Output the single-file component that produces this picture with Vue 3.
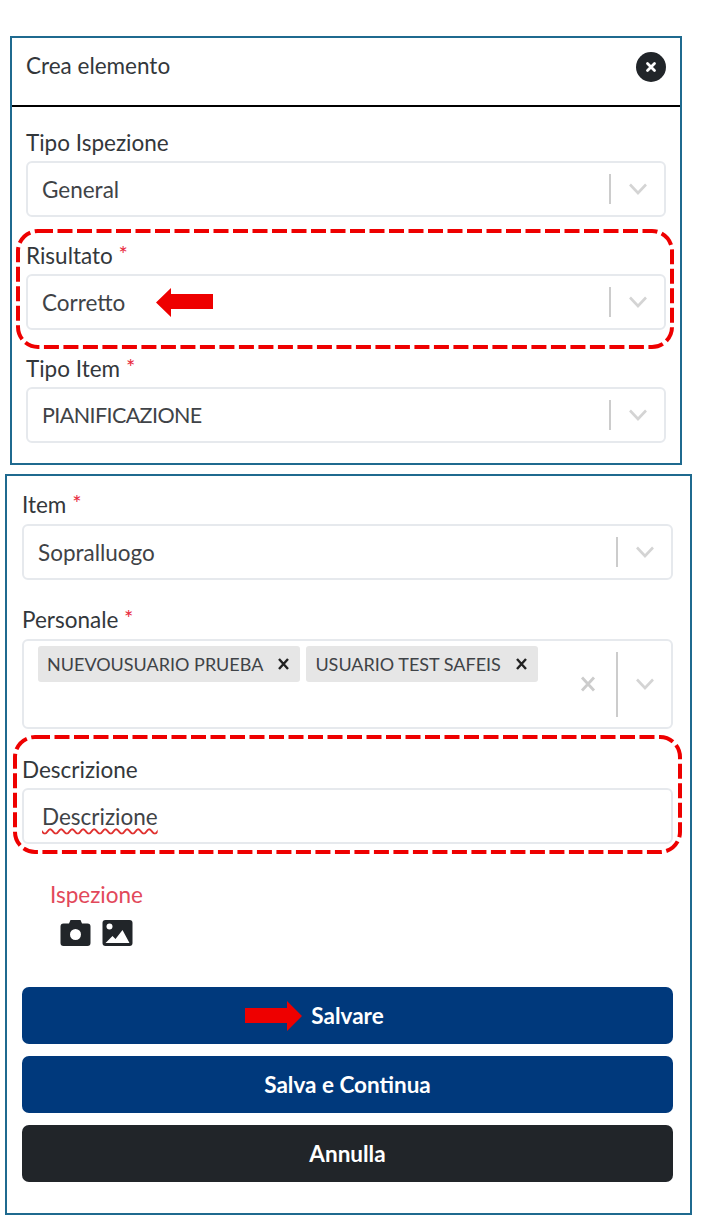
<template>
  <div class="page">
    <section class="card card-top">
      <header class="card-header">
        <span class="title">Crea elemento</span>
        <button class="close-btn" type="button">
          <svg width="12" height="12" viewBox="0 0 12 12"><path d="M2.500 2.500l7 7M9.500 2.500l-7 7" stroke="#fff" stroke-width="2.800" stroke-linecap="round" /></svg>
        </button>
      </header>
      <div class="card-body">
        <div v-for="field in topFields" :key="field.label" class="form-group">
          <label class="field-label">{{ field.label }} <span v-if="field.required" class="req">*</span></label>
          <div class="select-box">
            <span class="select-value" :class="{ caps: field.caps }">{{ field.value }}</span>
            <span class="select-sep"></span>
            <svg class="chevron" width="20" height="20" viewBox="0 0 20 20"><path d="M2 5.500L10 14l8-8.500" fill="none" stroke="#d4d4d4" stroke-width="2.600" /></svg>
          </div>
        </div>
      </div>
      <svg class="highlight highlight-top" width="658" height="120" viewBox="0 0 658 120"><rect x="2" y="2" width="654" height="116" rx="20" fill="none" stroke="#ee0000" stroke-width="4" stroke-dasharray="15 4.500" /></svg>
      <svg class="arrow arrow-left" width="57" height="29" viewBox="0 0 57 29"><path d="M0 14.500L15 0V6H57V21H15V29Z" fill="#ee0000" /></svg>
    </section>

    <section class="card card-bottom">
      <div class="form-group">
        <label class="field-label">Item <span class="req">*</span></label>
        <div class="select-box">
          <span class="select-value">Sopralluogo</span>
          <span class="select-sep"></span>
          <svg class="chevron" width="20" height="20" viewBox="0 0 20 20"><path d="M2 5.500L10 14l8-8.500" fill="none" stroke="#d4d4d4" stroke-width="2.600" /></svg>
        </div>
      </div>

      <div class="form-group group-personale">
        <label class="field-label">Personale <span class="req">*</span></label>
        <div class="select-box select-multi">
          <div class="tags">
            <span v-for="tag in tags" :key="tag" class="tag">
              <span class="tag-text">{{ tag }}</span>
              <svg width="11" height="12" viewBox="0 0 11 12"><path d="M1 1l9 10M10 1L1 11" stroke="#222" stroke-width="2.400" /></svg>
            </span>
          </div>
          <svg class="clear" width="16" height="16" viewBox="0 0 16 16"><path d="M2 1.500l12 13M14 1.500L2 14.500" stroke="#cccccc" stroke-width="2.800" /></svg>
          <span class="select-sep sep-tall"></span>
          <svg class="chevron" width="20" height="20" viewBox="0 0 20 20"><path d="M2 5.500L10 14l8-8.500" fill="none" stroke="#d4d4d4" stroke-width="2.600" /></svg>
        </div>
      </div>

      <div class="form-group group-desc">
        <label class="field-label">Descrizione</label>
        <div class="select-box">
          <span class="select-value desc-value">Descrizione</span>
        </div>
      </div>

      <div class="attach">
        <div class="attach-label">Ispezione</div>
        <div class="attach-icons">
          <svg width="31" height="26" viewBox="0 0 30 26"><path fill="#212529" d="M10 0h10l1.500 3.500H27a3 3 0 0 1 3 3V23a3 3 0 0 1-3 3H3a3 3 0 0 1-3-3V6.500a3 3 0 0 1 3-3h5.500z" /><circle cx="15" cy="14.500" r="5.500" fill="#fff" /></svg>
          <svg width="31" height="26" viewBox="0 0 30 26"><rect width="30" height="26" rx="3" fill="#212529" /><circle cx="7" cy="6.500" r="3" fill="#fff" /><path fill="#fff" d="M3 23l7-7 3 3 7-9 7 13z" /></svg>
        </div>
      </div>

      <div class="actions">
        <button type="button" class="btn btn-primary">Salvare</button>
        <button type="button" class="btn btn-primary">Salva e Continua</button>
        <button type="button" class="btn btn-dark">Annulla</button>
      </div>

      <svg class="highlight highlight-bottom" width="669" height="119" viewBox="0 0 669 119"><rect x="2" y="2" width="665" height="115" rx="20" fill="none" stroke="#ee0000" stroke-width="4" stroke-dasharray="15 4.500" /></svg>
      <svg class="arrow arrow-right" width="57" height="30" viewBox="0 0 57 30"><path d="M57 15L42 0V7H0V22H42V30Z" fill="#ee0000" /></svg>
    </section>
  </div>
</template>

<script setup>
const topFields = [
  { label: 'Tipo Ispezione', value: 'General', required: false },
  { label: 'Risultato', value: 'Corretto', required: true },
  { label: 'Tipo Item', value: 'PIANIFICAZIONE', required: true, caps: true }
];

const tags = ['NUEVOUSUARIO PRUEBA', 'USUARIO TEST SAFEIS'];
</script>

<style>
body {
  background: #fff;
}
</style>

<style scoped>
.page {
  width: 701px;
  height: 1223px;
  padding-top: 36px;
  box-sizing: border-box;
  font-family: Lato, "Noto Sans", sans-serif;
  color: #212529;
  overflow: hidden;
}

.card {
  position: relative;
  border: 2px solid #1f6a8f;
  box-sizing: border-box;
  background: #fff;
}

.card-top {
  width: 672px;
  height: 429px;
  margin-left: 10px;
}

.card-bottom {
  width: 687px;
  height: 741px;
  margin-left: 5px;
  margin-top: 9px;
  padding: 16px 17px 0 15px;
}

.card-header {
  height: 69px;
  border-bottom: 2px solid #000;
  display: flex;
  align-items: center;
  justify-content: space-between;
  padding: 0 14px 9px;
  box-sizing: border-box;
}

.title {
  font-size: 22.500px;
  line-height: 26px;
  margin-bottom: 2px;
  color: #33373b;
}

.close-btn {
  width: 30px;
  height: 30px;
  border-radius: 50%;
  border: none;
  padding: 0;
  background: #212529;
  display: flex;
  align-items: center;
  justify-content: center;
}

.card-body {
  padding: 23px 14px 0;
}

.form-group {
  margin-bottom: 27px;
}

.card-top .form-group {
  margin-bottom: 26px;
}

.group-personale {
  margin-bottom: 28px;
}

.field-label {
  display: block;
  font-size: 22.500px;
  line-height: 26px;
  margin-bottom: 6px;
  color: #33373b;
}

.card-top .field-label,
.group-desc .field-label {
  margin-bottom: 5px;
}

.req {
  color: #e8283c;
  font-size: 22px;
  line-height: 0;
  vertical-align: 2px;
}

.select-box {
  height: 56px;
  border: 2px solid #e6e9ed;
  border-radius: 6px;
  box-sizing: border-box;
  display: flex;
  align-items: center;
  padding: 0 16px 0 14px;
  background: #fff;
}

.select-value {
  flex: 1;
  font-size: 22.500px;
  color: #3f4347;
}

.caps {
  font-size: 21.500px;
  letter-spacing: -0.6px;
}

.select-sep {
  width: 2px;
  height: 30px;
  background: #cccccc;
  margin-right: 17px;
}

.chevron {
  flex: none;
}

.select-multi {
  height: 90px;
}

.tags {
  flex: 1;
  align-self: flex-start;
  display: flex;
  gap: 6px;
  padding-top: 5px;
}

.tag {
  height: 36px;
  background: #e6e6e6;
  border-radius: 3px;
  display: flex;
  align-items: center;
  padding: 0 11px 0 9px;
  gap: 15px;
  box-sizing: border-box;
}

.tag-text {
  font-size: 18px;
  color: #3f4347;
}

.clear {
  margin-right: 20px;
}

.sep-tall {
  height: 65px;
}

.group-desc {
  margin-bottom: 0;
}

.desc-value {
  text-decoration: underline wavy #e0312f;
  text-decoration-thickness: 1.500px;
  text-underline-offset: 3px;
  flex: none;
  margin-left: 4px;
}

.attach {
  margin-top: 38px;
  padding-left: 28px;
}

.attach-label {
  font-size: 22.500px;
  line-height: 26px;
  color: #e2485a;
}

.attach-icons {
  display: flex;
  gap: 11px;
  margin-top: 12px;
  margin-left: 10px;
}

.actions {
  margin-top: 41px;
  display: flex;
  flex-direction: column;
  gap: 12px;
}

.btn {
  height: 57px;
  border: none;
  border-radius: 7px;
  color: #fff;
  font-family: inherit;
  font-size: 22.500px;
  font-weight: 700;
}

.btn-primary {
  background: #00397c;
}

.btn-dark {
  background: #212529;
}

.highlight {
  position: absolute;
  pointer-events: none;
}

.highlight-top {
  left: 4px;
  top: 191px;
}

.highlight-bottom {
  left: 6px;
  top: 259px;
}

.arrow {
  position: absolute;
}

.arrow-left {
  left: 144px;
  top: 250px;
}

.arrow-right {
  left: 238px;
  top: 525px;
}
</style>
